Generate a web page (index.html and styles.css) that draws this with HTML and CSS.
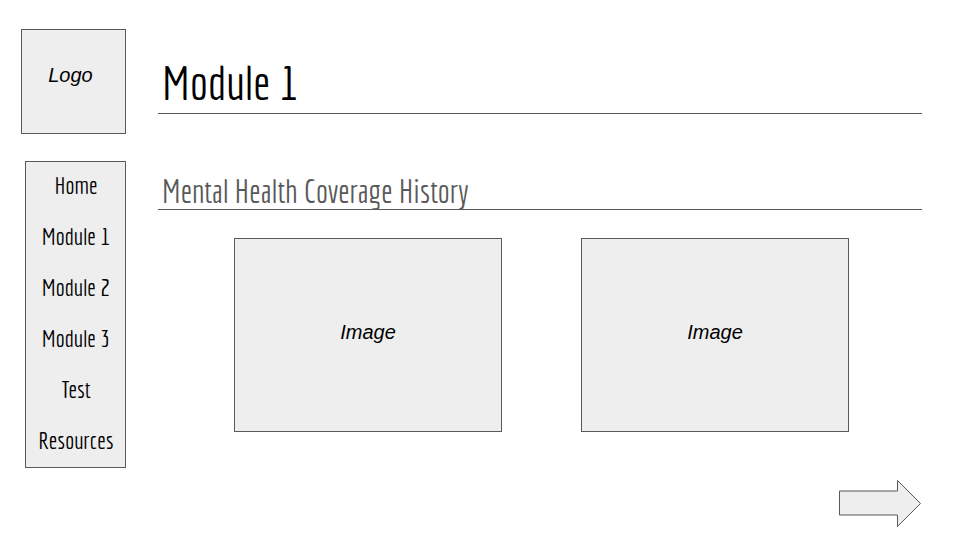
FILE: index.html
```html
<!DOCTYPE html>
<html lang="en">
<head>
<meta charset="utf-8">
<meta name="viewport" content="width=device-width, initial-scale=1">
<title>Module 1</title>
<link rel="stylesheet" href="styles.css">
</head>
<body>
<div class="page">
  <aside class="sidebar">
    <div class="logo">Logo</div>
    <nav class="menu">
      <a href="#home">Home</a>
      <a href="#module-1">Module 1</a>
      <a href="#module-2">Module 2</a>
      <a href="#module-3">Module 3</a>
      <a href="#test">Test</a>
      <a href="#resources">Resources</a>
    </nav>
  </aside>
  <main class="content">
    <h1>Module 1</h1>
    <h2>Mental Health Coverage History</h2>
    <div class="images">
      <div class="image">Image</div>
      <div class="image">Image</div>
    </div>
    <a class="next" href="#module-2" aria-label="Next">
      <svg width="84" height="48" viewBox="0 0 84 48">
        <path d="M1.500 12H59.500V1.500L82.500 24.500L59.500 47.500V36H1.500Z" fill="#eee" stroke="#595959"/>
      </svg>
    </a>
  </main>
</div>
</body>
</html>
```
FILE: styles.css
```css
* {
  box-sizing: border-box;
}

body {
  margin: 0;
  background: #fff;
  color: #000;
  font-family: Economica, "Liberation Sans Narrow", "Liberation Sans", sans-serif;
}

.page {
  display: grid;
  grid-template-columns: 105px 1fr;
  column-gap: 32px;
  padding: 29px 38px 12px 21px;
}

.logo,
.menu,
.image {
  background: #eee;
  border: 1px solid #595959;
}

.logo,
.image {
  display: flex;
  align-items: center;
  justify-content: center;
  font-family: "Liberation Sans", sans-serif;
  font-size: 20px;
  font-style: italic;
}

.logo {
  aspect-ratio: 1;
  padding: 0 6px 12px 0;
}

.menu {
  display: flex;
  flex-direction: column;
  gap: 27px;
  margin: 27px 0 0 4px;
  padding: 11px 0 15px 1px;
}

.menu a {
  color: #000;
  font-size: 24px;
  line-height: 24px;
  text-align: center;
  text-decoration: none;
}

h1,
h2 {
  margin: 0;
  padding-left: 4px;
  border-bottom: 1px solid #595959;
  font-weight: 400;
}

h1 {
  padding-top: 22px;
  font-size: 48px;
  line-height: 62px;
}

h2 {
  margin-top: 60px;
  color: #595959;
  font-size: 32px;
  line-height: 35px;
}

.images {
  display: grid;
  grid-template-columns: 1fr 1fr;
  gap: 79px;
  margin-top: 28px;
  padding: 0 73px 0 76px;
}

.image {
  aspect-ratio: 268 / 194;
  padding-bottom: 6px;
}

.next {
  display: block;
  width: 84px;
  margin: 47px 0 0 auto;
}

.next svg {
  display: block;
}
```
